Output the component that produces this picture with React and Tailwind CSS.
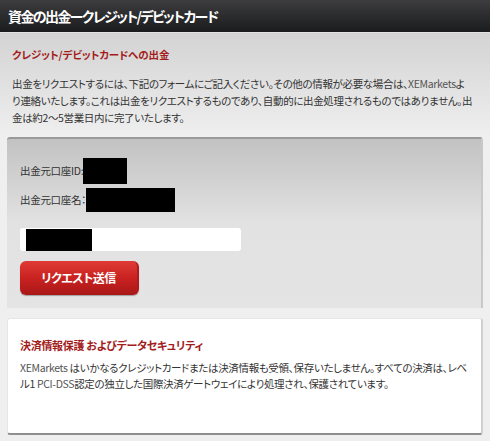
import React from "react";

const font = { fontFamily: '"Noto Sans CJK JP", "Liberation Sans", sans-serif', fontFeatureSettings: '"palt"' };

export default function App() {
  return (
    <div className="w-[490px] h-[441px] overflow-hidden bg-[#efefef] text-[#333]" style={font}>
      {/* Header */}
      <div className="h-[33px] bg-gradient-to-b from-[#3d3d3f] to-[#1b1c1e] flex items-center px-2 border-b border-[#e2e2e2]">
        <h1 className="text-white text-[14px] font-bold tracking-[-1.6px]">資金の出金ークレジット/デビットカード</h1>
      </div>

      {/* Intro */}
      <div className="bg-gradient-to-b from-[#d3d3d3] to-[#efefef] px-3 pt-[13px] pb-[10px]">
        <h2 className="text-[#a31c1c] text-[10.5px] font-bold leading-[17px] tracking-[-0.1px]">クレジット/デビットカードへの出金</h2>
        <p className="mt-[12px] text-[10.5px] leading-[17px] tracking-[-0.35px] whitespace-nowrap">
          出金をリクエストするには、下記のフォームにご記入ください。その他の情報が必要な場合は、<span className="text-[#555]">XEMarkets</span>よ
          <br />
          り連絡いたします。これは出金をリクエストするものであり、自動的に出金処理されるものではありません。出
          <br />
          金は約2～5営業日内に完了いたします。
        </p>
      </div>

      {/* Form panel */}
      <div className="mx-[7px] mt-[1px] h-[171px] rounded-t-[3px] border-t-2 border-[#9a9a9a] border-r-2 border-r-[#c8c8c8] bg-gradient-to-b from-[#c2c2c2] via-[#e2e2e2] to-[#e4e4e4] px-[13px] pt-[19px]">
        <div className="flex items-center text-[10.5px] tracking-[-0.3px] h-[26px]">
          <span>出金元口座ID:</span>
          <span className="w-[44px] h-[26px] bg-black" />
        </div>
        <div className="flex items-center text-[10.5px] tracking-[-0.3px] h-[24px] mt-[4px]">
          <span>出金元口座名：</span>
          <span className="w-[89px] h-[24px] bg-black" />
        </div>
        <div className="mt-[16px] w-[221px] h-[23px] bg-white rounded-[3px] px-[6px] flex items-center">
          <span className="w-[66px] h-[22px] bg-black" />
        </div>
        <button className="mt-[10px] w-[119px] h-[34px] rounded-[6px] bg-gradient-to-b from-[#e03a36] via-[#c92221] to-[#a91717] border-r-2 border-[#b01c1c] shadow-[0_1px_1px_rgba(0,0,0,0.3)] text-white text-[12px] font-bold tracking-[-0.5px]">
          リクエスト送信
        </button>
      </div>

      {/* Security card */}
      <div className="mx-[7px] mt-[10px] h-[117px] bg-white rounded-[3px] border border-[#e5e5e5] border-b-2 border-b-[#8f8f8f] border-r-2 border-r-[#d0d0d0] px-[12px] pt-[18px]">
        <h3 className="text-[#a31c1c] text-[11px] font-bold leading-[16px] tracking-[-0.3px]">決済情報保護 およびデータセキュリティ</h3>
        <p className="mt-[7px] text-[10.5px] leading-[16px] tracking-[-0.35px] whitespace-nowrap">
          <span className="text-[#555]">XEMarkets</span> はいかなるクレジットカードまたは決済情報も受領、保存いたしません。すべての決済は、レベ
          <br />
          ル1 <span className="text-[#555]">PCI-DSS</span>認定の独立した国際決済ゲートウェイにより処理され、保護されています。
        </p>
      </div>
    </div>
  );
}
